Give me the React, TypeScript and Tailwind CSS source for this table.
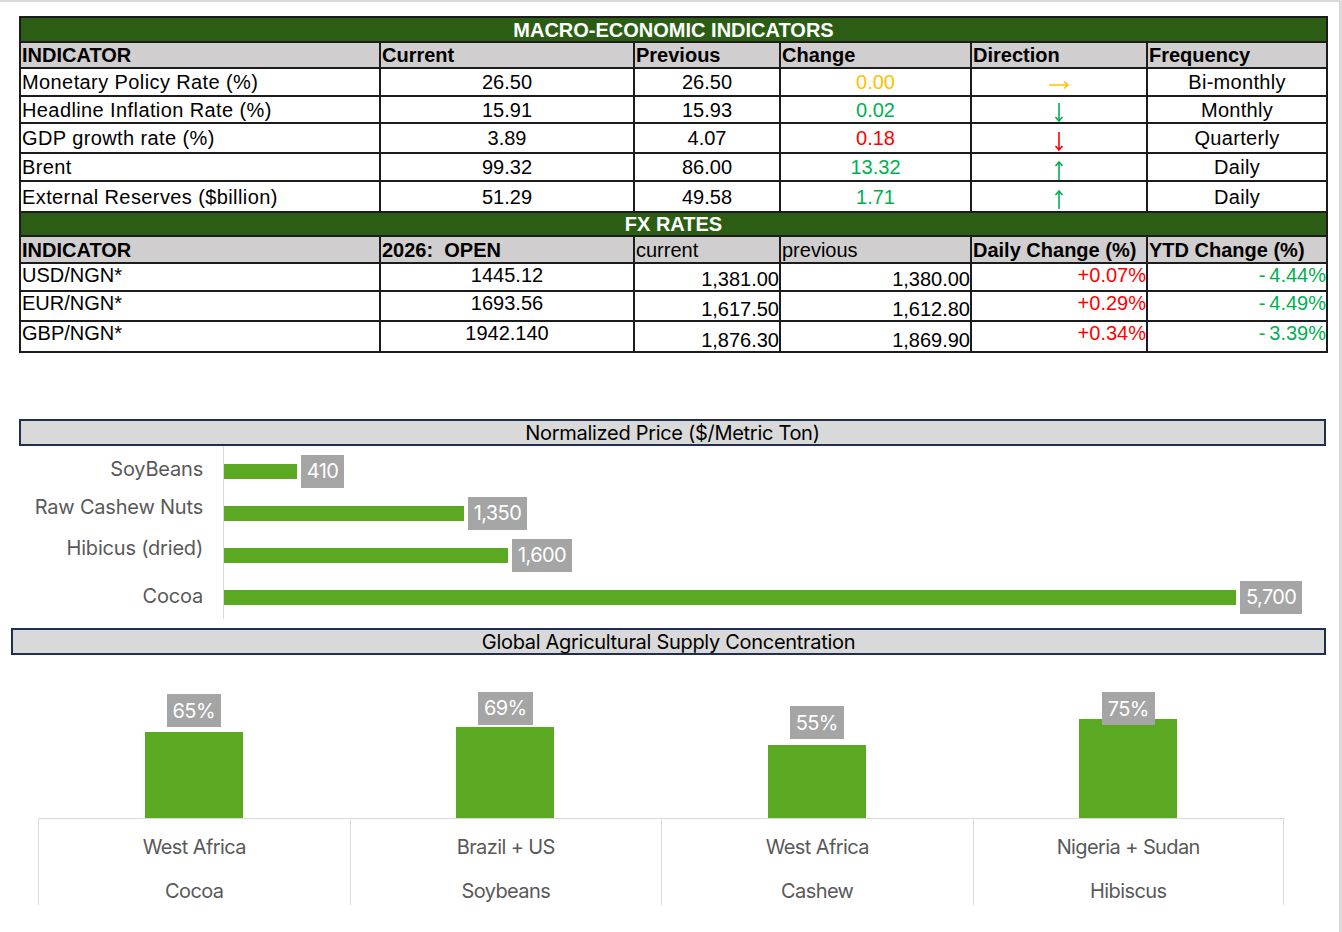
import React from 'react';

type Dir = 'right' | 'down' | 'up';

const macroRows: { name: string; cur: string; prev: string; chg: string; dir: Dir; tone: string; freq: string; h: string }[] = [
  { name: 'Monetary Policy Rate (%)', cur: '26.50', prev: '26.50', chg: '0.00', dir: 'right', tone: 'text-[#ffc000]', freq: 'Bi-monthly', h: 'h-[28px]' },
  { name: 'Headline Inflation Rate (%)', cur: '15.91', prev: '15.93', chg: '0.02', dir: 'down', tone: 'text-[#00b050]', freq: 'Monthly', h: 'h-[27px]' },
  { name: 'GDP growth rate (%)', cur: '3.89', prev: '4.07', chg: '0.18', dir: 'down', tone: 'text-[#ff0000]', freq: 'Quarterly', h: 'h-[30px]' },
  { name: 'Brent', cur: '99.32', prev: '86.00', chg: '13.32', dir: 'up', tone: 'text-[#00b050]', freq: 'Daily', h: 'h-[28px]' },
  { name: 'External Reserves ($billion)', cur: '51.29', prev: '49.58', chg: '1.71', dir: 'up', tone: 'text-[#00b050]', freq: 'Daily', h: 'h-[31px]' },
];

const fxRows = [
  { pair: 'USD/NGN*', open: '1445.12', cur: '1,381.00', prev: '1,380.00', daily: '+0.07%', ytd: '-\u20094.44%', h: 'h-[28px]' },
  { pair: 'EUR/NGN*', open: '1693.56', cur: '1,617.50', prev: '1,612.80', daily: '+0.29%', ytd: '-\u20094.49%', h: 'h-[30px]' },
  { pair: 'GBP/NGN*', open: '1942.140', cur: '1,876.30', prev: '1,869.90', daily: '+0.34%', ytd: '-\u20093.39%', h: 'h-[31px]' },
];

const prices = [
  { label: 'SoyBeans', value: 410, lift: 'mb-[4px]' },
  { label: 'Raw Cashew Nuts', value: 1350, lift: 'mb-[12px]' },
  { label: 'Hibicus (dried)', value: 1600, lift: 'mb-[14px]' },
  { label: 'Cocoa', value: 5700, lift: 'mb-[2px]' },
];

const supply = [
  { region: 'West Africa', crop: 'Cocoa', pct: 65, gap: 'mb-[5px]' },
  { region: 'Brazil + US', crop: 'Soybeans', pct: 69, gap: 'mb-[2px]' },
  { region: 'West Africa', crop: 'Cashew', pct: 55, gap: 'mb-[6px]' },
  { region: 'Nigeria + Sudan', crop: 'Hibiscus', pct: 75, gap: 'mb-[-6px]' },
];

const td = 'border-2 border-[#1c1c1c] p-0 px-[1px] leading-[22px]';
const head = 'border-2 border-[#1c1c1c] bg-[#d0cece] p-0 px-[1px] text-left font-bold leading-[22px]';

// thin excel-style arrow glyphs
const DirArrow: React.FC<{ dir: Dir }> = ({ dir }) => {
  if (dir === 'right') {
    return (
      <svg width="20" height="10" viewBox="0 0 20 10" className="mx-auto block" fill="none" stroke="currentColor" strokeWidth="1.6">
        <path d="M0 5H19M15 1.5L19 5L15 8.5" />
      </svg>
    );
  }
  return (
    <svg width="10" height="19" viewBox="0 0 10 19" className={`mx-auto block ${dir === 'up' ? 'rotate-180' : ''}`} fill="none" stroke="currentColor" strokeWidth="1.6">
      <path d="M5 0V18M1.5 14L5 18L8.5 14" />
    </svg>
  );
};

const MacroTable: React.FC = () => (
  <table className="w-[1307px] table-fixed border-collapse border-2 border-[#1c1c1c] text-[20px] text-black font-['Liberation_Sans',Arial,sans-serif]">
    <colgroup>
      <col className="w-[360px]" />
      <col className="w-[254px]" />
      <col className="w-[146px]" />
      <col className="w-[191px]" />
      <col className="w-[176px]" />
      <col className="w-[180px]" />
    </colgroup>
    <tbody>
      <tr className="h-[25px]">
        <td colSpan={6} className={`${td} bg-[#2b5e14] text-center font-bold text-white`}>MACRO-ECONOMIC INDICATORS</td>
      </tr>
      <tr className="h-[26px]">
        <td className={head}>INDICATOR</td>
        <td className={head}>Current</td>
        <td className={head}>Previous</td>
        <td className={head}>Change</td>
        <td className={head}>Direction</td>
        <td className={head}>Frequency</td>
      </tr>
      {macroRows.map((r) => (
        <tr key={r.name} className={r.h}>
          <td className={`${td} tracking-[0.4px]`}>{r.name}</td>
          <td className={`${td} text-center`}>{r.cur}</td>
          <td className={`${td} text-center`}>{r.prev}</td>
          <td className={`${td} text-center ${r.tone}`}>{r.chg}</td>
          <td className={`${td} ${r.tone}`}>
            <div className={r.dir === 'right' ? 'relative top-[3px]' : 'relative top-[3px]'}>
              <DirArrow dir={r.dir} />
            </div>
          </td>
          <td className={`${td} text-center tracking-[0.3px]`}>{r.freq}</td>
        </tr>
      ))}
      <tr className="h-[24px]">
        <td colSpan={6} className={`${td} bg-[#2b5e14] text-center font-bold text-white`}>FX RATES</td>
      </tr>
      <tr className="h-[27px]">
        <td className={head}>INDICATOR</td>
        <td className={head}>2026:&nbsp; OPEN</td>
        <td className={`${head} !font-normal`}>current</td>
        <td className={`${head} !font-normal`}>previous</td>
        <td className={head}>Daily Change (%)</td>
        <td className={head}>YTD Change (%)</td>
      </tr>
      {fxRows.map((r) => (
        <tr key={r.pair} className={r.h}>
          <td className={`${td} align-top`}>{r.pair}</td>
          <td className={`${td} align-top text-center`}>{r.open}</td>
          <td className={`${td} align-bottom !px-0 text-right`}>{r.cur}</td>
          <td className={`${td} align-bottom !px-0 text-right`}>{r.prev}</td>
          <td className={`${td} align-top !px-0 text-right text-[#ff0000]`}>{r.daily}</td>
          <td className={`${td} align-top !px-0 text-right text-[#00b050]`}>{r.ytd}</td>
        </tr>
      ))}
    </tbody>
  </table>
);

const ChartTitle: React.FC<{ children: React.ReactNode; className: string }> = ({ children, className }) => (
  <div className={`flex h-[27px] items-center justify-center border-2 border-[#1f2f4f] bg-[#d9d9d9] text-[20px] tracking-[-0.015em] text-black ${className}`}>
    {children}
  </div>
);

const PriceChart: React.FC = () => (
  <div className="flex">
    <div className="flex w-[203px] flex-col pt-[4px]">
      {prices.map((p) => (
        <div key={p.label} className="flex h-[42px] items-center justify-end">
          <span className={`text-[20px] tracking-[-0.01em] text-[#595959] ${p.lift}`}>{p.label}</span>
        </div>
      ))}
    </div>
    <div className="ml-[20px] flex flex-1 flex-col border-l border-[#d9d9d9] pt-[4px] pb-[1px]">
      {prices.map((p) => (
        <div key={p.label} className="flex h-[42px] items-center">
          <div className="h-[15px] bg-[#5ba823]" style={{ width: `${(p.value * 1012) / 5700}px` }} />
          <div className="ml-[4px] flex h-[33px] items-center bg-[#a5a5a5] px-[6px] text-[20px] tracking-[-0.03em] text-white">
            {p.value.toLocaleString('en-US')}
          </div>
        </div>
      ))}
    </div>
  </div>
);

const SupplyChart: React.FC = () => (
  <div className="ml-[38px] flex w-[1246px]">
    {supply.map((s, i) => (
      <div key={s.crop} className="flex flex-1 flex-col">
        <div className="flex h-[163px] flex-col items-center justify-end">
          <div className={`relative z-10 flex h-[33px] items-center bg-[#a5a5a5] px-[6px] text-[20px] tracking-[-0.03em] text-white ${s.gap}`}>
            {s.pct}%
          </div>
          <div className="w-[98px] bg-[#5ba823]" style={{ height: `${s.pct * 1.32}px` }} />
        </div>
        <div
          className={`flex h-[87px] flex-col items-center gap-[16px] border-t border-l border-[#d9d9d9] pt-[14px] text-[20px] leading-[28px] tracking-[-0.03em] text-[#595959] ${
            i === supply.length - 1 ? 'border-r' : ''
          }`}
        >
          <span>{s.region}</span>
          <span>{s.crop}</span>
        </div>
      </div>
    ))}
  </div>
);

const App: React.FC = () => {
  return (
    <div className="h-[932px] w-[1342px] overflow-hidden border-t-2 border-r-[3px] border-[#d9d9d9] bg-white font-['Inter',sans-serif]">
      <div className="ml-[19px] mt-[14px]">
        <MacroTable />
      </div>

      <ChartTitle className="ml-[19px] mt-[66px] w-[1307px]">Normalized Price ($/Metric Ton)</ChartTitle>
      <PriceChart />

      <ChartTitle className="ml-[11px] mt-[9px] w-[1315px]">Global Agricultural Supply Concentration</ChartTitle>
      <SupplyChart />
    </div>
  );
};

export default App;
